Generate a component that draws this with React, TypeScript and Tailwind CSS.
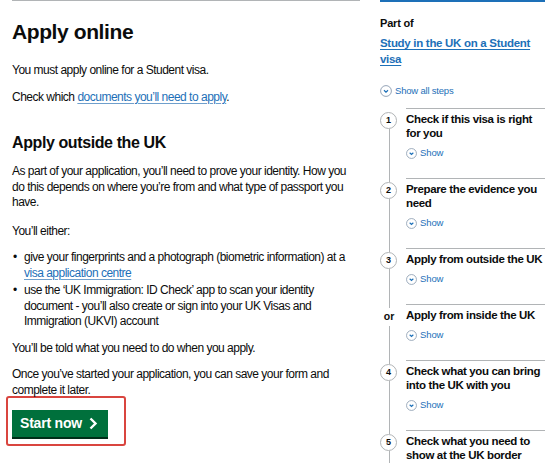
import React from 'react';

const font = { fontFamily: '"Liberation Sans", Arial, sans-serif' };

function ShowIcon({ size = 11 }: { size?: number }) {
  return (
    <svg width={size} height={size} viewBox="0 0 12 12" className="shrink-0">
      <circle cx="6" cy="6" r="5.4" fill="none" stroke="#8a9bb0" strokeWidth="0.9" />
      <path d="M4 5.2 L6 7.1 L8 5.2" fill="none" stroke="#1d70b8" strokeWidth="1.2" />
    </svg>
  );
}

interface Step {
  marker: string;
  title: React.ReactNode;
}

const steps: Step[] = [
  { marker: '1', title: <>Check if this visa is right<br />for you</> },
  { marker: '2', title: <>Prepare the evidence you<br />need</> },
  { marker: '3', title: <>Apply from outside the UK</> },
  { marker: 'or', title: <>Apply from inside the UK</> },
  { marker: '4', title: <>Check what you can bring<br />into the UK with you</> },
  { marker: '5', title: <>Check what you need to<br />show at the UK border</> },
];

function StepRow({ step, first }: { step: Step; first: boolean }) {
  const isOr = step.marker === 'or';
  return (
    <div className="flex">
      {/* gutter with number and connecting line */}
      <div className="w-[26px] flex flex-col items-start shrink-0">
        <div className={`ml-[8.5px] w-px h-[4px] ${first ? 'bg-transparent' : 'bg-[#b1b4b6]'}`} />
        {isOr ? (
          <div className="w-[18px] h-[16px] flex items-center justify-center text-[10.5px] font-bold text-[#0b0c0c] leading-none">
            or
          </div>
        ) : (
          <div className="w-[17px] h-[17px] rounded-full border border-[#b1b4b6] bg-white flex items-center justify-center text-[9px] font-bold text-[#0b0c0c] leading-none">
            {step.marker}
          </div>
        )}
        <div className={`ml-[8.5px] w-px flex-1 bg-[#b1b4b6] ${isOr ? 'mt-[2px]' : ''}`} />
      </div>
      <div className="flex-1 border-t border-[#b1b4b6] pt-[3px] pb-[19px]">
        <div className="text-[11.5px] leading-[14px] font-bold text-[#0b0c0c] tracking-[-0.35px] whitespace-nowrap">
          {step.title}
        </div>
        <div className="mt-[7px] h-[12px] flex items-center gap-[3px] text-[9.5px] text-[#1d70b8] tracking-[-0.1px]">
          <ShowIcon />
          <span>Show</span>
        </div>
      </div>
    </div>
  );
}

export default function App() {
  return (
    <div className="w-[554px] h-[463px] overflow-hidden bg-white flex pl-[12px] pr-[9px] text-[#0b0c0c]" style={font}>
      {/* Main column */}
      <div className="w-[348px] shrink-0 border-t border-[#b1b4b6] pt-[18px]">
        <h1 className="text-[21px] leading-[26px] font-bold tracking-[-0.4px]">Apply online</h1>

        <div className="text-[12px] leading-[15.5px] tracking-[-0.5px] whitespace-nowrap">
          <p className="mt-[18px]">You must apply online for a Student visa.</p>
          <p className="mt-[11px]">
            Check which{' '}
            <a href="#" className="text-[#1d70b8] underline underline-offset-2 decoration-1 decoration-[#6f9fcc]">
              documents you’ll need to apply
            </a>
            .
          </p>
        </div>

        <h2 className="mt-[28px] text-[16px] leading-[20px] font-bold tracking-[-0.4px]">Apply outside the UK</h2>

        <div className="text-[12px] leading-[15.5px] tracking-[-0.5px] whitespace-nowrap">
          <p className="mt-[11px]">
            As part of your application, you’ll need to prove your identity. How you
            <br />
            do this depends on where you’re from and what type of passport you
            <br />
            have.
          </p>
          <p className="mt-[13px]">You’ll either:</p>
          <ul className="mt-[11px] flex flex-col gap-[2px]">
            <li className="flex">
              <span className="w-[12px] shrink-0 pl-[1px]">•</span>
              <span>
                give your fingerprints and a photograph (biometric information) at a
                <br />
                <a href="#" className="text-[#1d70b8] underline underline-offset-2 decoration-1 decoration-[#6f9fcc]">
                  visa application centre
                </a>
              </span>
            </li>
            <li className="flex">
              <span className="w-[12px] shrink-0 pl-[1px]">•</span>
              <span>
                use the ‘UK Immigration: ID Check’ app to scan your identity
                <br />
                document - you’ll also create or sign into your UK Visas and
                <br />
                Immigration (UKVI) account
              </span>
            </li>
          </ul>
          <p className="mt-[11px]">You’ll be told what you need to do when you apply.</p>
          <p className="mt-[11px]">
            Once you’ve started your application, you can save your form and
            <br />
            complete it later.
          </p>
        </div>

        {/* highlighted start button */}
        <div className="-ml-[6px] -mt-[2px] w-[120px] border-2 border-[#d9453f] rounded-[3px] pt-[12px] pl-[4px] pb-[7px]">
          <button className="w-[96px] h-[27px] bg-[#00703c] shadow-[0_2px_0_#002d18] flex items-center pl-[8px] gap-[7px] text-white text-[14px] font-bold tracking-[-0.2px]">
            <span>Start now</span>
            <svg width="9" height="13" viewBox="0 0 9 13">
              <path d="M1.5 1.5 L6.5 6.5 L1.5 11.5" fill="none" stroke="white" strokeWidth="2.4" />
            </svg>
          </button>
        </div>
      </div>

      {/* Step by step sidebar */}
      <div className="ml-[20px] flex-1 border-t-2 border-[#1d70b8] pt-[14px]">
        <p className="text-[11px] leading-[14px] font-bold tracking-[-0.2px]">Part of</p>
        <a
          href="#"
          className="block mt-[5px] text-[11.5px] leading-[16px] font-bold text-[#1d70b8] underline underline-offset-2 decoration-1 tracking-[-0.3px]"
        >
          Study in the UK on a Student
          <br />
          visa
        </a>
        <div className="mt-[18px] h-[12px] flex items-center gap-[3px] text-[9.5px] text-[#1d70b8] tracking-[-0.2px]">
          <ShowIcon size={12} />
          <span>Show all steps</span>
        </div>

        <div className="mt-[11px] flex flex-col">
          {steps.map((s, i) => (
            <StepRow key={i} step={s} first={i === 0} />
          ))}
        </div>
      </div>
    </div>
  );
}
